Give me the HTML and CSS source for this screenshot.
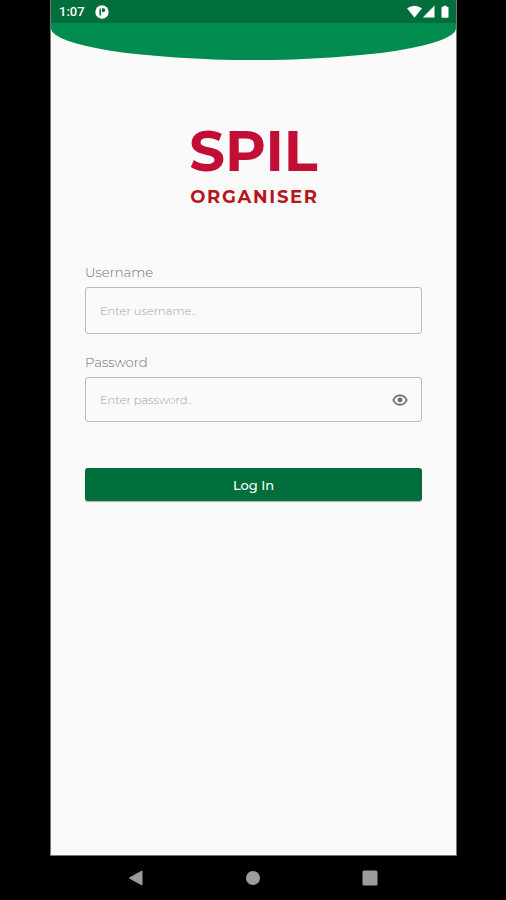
FILE: index.html
```
<!DOCTYPE html>
<html lang="en">
<head>
    <meta charset="UTF-8">
    <meta name="viewport" content="width=device-width, initial-scale=1.0">
    <title>SPIL Organiser</title>
    <link rel="stylesheet" href="styles.css">
</head>
<body>

<div class="screen">
    <header class="header">
        <div class="status-bar">
            <span class="time">1:07</span>
            <svg class="app-icon" width="14" height="14" viewBox="0 0 14 14">
                <circle cx="7" cy="7" r="6.7" fill="#fff"/>
                <path d="M5.2 3.6V10.6" fill="none" stroke="#006e3b" stroke-width="1.5"/>
                <path d="M7 3.2h1.4a1.8 1.8 0 0 1 0 3.8H7z" fill="#006e3b"/>
            </svg>
            <svg class="signals" width="42" height="14" viewBox="0 0 42 14" fill="#fff">
                <path d="M0 3.3Q7.5-1.8 15 3.3L7.5 12.7z"/>
                <path d="M27.5 .5v12H15.8z"/>
                <path d="M35.3 1.8h1.2V.7h3v1.1h1.2q.8 0 .8.8v9.3q0 .8-.8.8h-5.4q-.8 0-.8-.8V2.6q0-.8.8-.8z"/>
            </svg>
        </div>
    </header>

    <div class="logo">
        <div class="logo-title">SPIL</div>
        <div class="logo-subtitle">ORGANISER</div>
    </div>

    <form class="login-form">
        <label class="label" for="username">Username</label>
        <div class="field">
            <input type="text" id="username" class="input" placeholder="Enter username..">
        </div>

        <label class="label" for="password">Password</label>
        <div class="field field-password">
            <input type="password" id="password" class="input" placeholder="Enter password..">
            <svg class="eye" width="16" height="12" viewBox="0 0 16 12">
                <path d="M1.3 6C4 -.3 12 -.3 14.7 6 12 12.3 4 12.3 1.3 6z" fill="none" stroke="#707070" stroke-width="1.8"/>
                <circle cx="8" cy="6" r="2.4" fill="#707070"/>
            </svg>
        </div>

        <button type="button" class="button">Log In</button>
    </form>
</div>

<nav class="nav-bar">
    <svg width="16" height="18" viewBox="0 0 16 18"><path d="M1.3 9L14 2v14z" fill="#9c9c9c" stroke="#9c9c9c" stroke-linejoin="round"/></svg>
    <svg width="16" height="18" viewBox="0 0 16 18"><circle cx="8" cy="9" r="7" fill="#9c9c9c"/></svg>
    <svg width="16" height="18" viewBox="0 0 16 18"><rect x=".5" y="1.5" width="15" height="15" rx="1.5" fill="#9c9c9c"/></svg>
</nav>

</body>
</html>
```
FILE: styles.css
```
* {
    box-sizing: border-box;
}
body {
    margin: 0;
    height: 900px;
    background: #000;
    font-family: Montserrat, Inter, sans-serif;
    overflow: hidden;
}
.screen {
    width: 407px;
    height: 856px;
    margin-left: 50px;
    background: #fafafa;
    border: 1px solid #777;
    border-top: none;
}
.header {
    height: 60px;
    background: #008c4f;
    border-radius: 0 0 50% 50% / 0 0 32px 32px;
    overflow: hidden;
}
.status-bar {
    display: flex;
    align-items: center;
    height: 23px;
    padding: 0 7px 0 8px;
    background: #006e3b;
}
.time {
    width: 36px;
    font: 500 13px Roboto, sans-serif;
    color: #fff;
}
.signals {
    margin-left: auto;
}
.logo {
    padding-top: 61px;
    text-align: center;
    font-weight: 700;
}
.logo-title {
    height: 63px;
    font-size: 56px;
    line-height: 61px;
    letter-spacing: 0;
    color: #c20e35;
}
.logo-subtitle {
    height: 26px;
    padding-left: 2px;
    font-size: 18px;
    line-height: 26px;
    letter-spacing: 1.7px;
    color: #b9141d;
}
.login-form {
    display: flex;
    flex-direction: column;
    padding: 54px 34px 0;
}
.label {
    height: 23px;
    font-size: 13.2px;
    font-weight: 300;
    line-height: 17px;
    color: #707070;
}
.field {
    display: flex;
    align-items: center;
    height: 47px;
    margin-bottom: 20px;
    padding: 0 13px 0 14px;
    border: 1px solid #bbb;
    border-radius: 3px;
}
.field-password {
    height: 45px;
    margin-bottom: 46px;
}
.input {
    flex: 1;
    min-width: 0;
    padding: 0;
    border: none;
    outline: none;
    background: none;
    font-family: inherit;
    font-size: 11.4px;
    font-weight: 300;
}
.input::placeholder {
    color: #a0a0a0;
}
.button {
    height: 33px;
    padding: 0;
    border: none;
    border-radius: 3px;
    background: #006e3b;
    box-shadow: 0 1px 1px rgba(0, 0, 0, 0.3);
    font-family: inherit;
    font-size: 13px;
    font-weight: 500;
    color: #fff;
}
.nav-bar {
    display: flex;
    justify-content: space-between;
    align-items: center;
    height: 44px;
    padding: 0 128px;
}
```
